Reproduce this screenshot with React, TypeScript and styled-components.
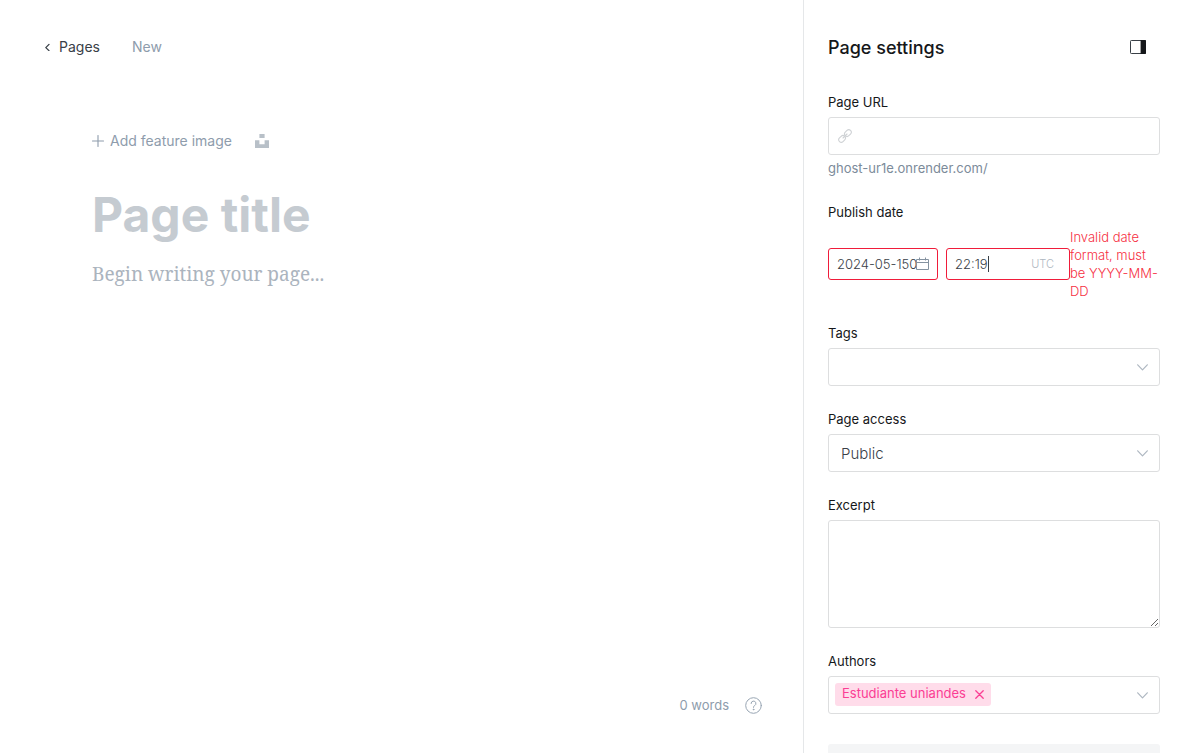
import React from "react";
import styled, { createGlobalStyle } from "styled-components";

const GlobalStyle = createGlobalStyle`
  *, *::before, *::after { box-sizing: border-box; }
  body {
    margin: 0;
    background: #fff;
    color: #15171a;
    font-family: Inter, "Liberation Sans", sans-serif;
    font-size: 13px;
    line-height: 20px;
  }
  button, input, select, textarea { font: inherit; color: inherit; }
`;

const Screen = styled.div`
  display: flex;
  height: 100vh;
  overflow: hidden;
`;

const Editor = styled.main`
  flex: 1;
  min-width: 0;
  display: flex;
  flex-direction: column;
`;

const TopBar = styled.header`
  display: flex;
  align-items: center;
  gap: 32px;
  padding: 37px 44px 0;
  font-size: 14px;
`;

const BackLink = styled.a`
  display: flex;
  align-items: center;
  gap: 8px;
  color: #394047;
  text-decoration: none;
`;

const Status = styled.span`
  color: #8e9cac;
`;

const Canvas = styled.section`
  flex: 1;
  display: flex;
  flex-direction: column;
  padding: 74px 92px 0;
`;

const ImageActions = styled.div`
  display: flex;
  align-items: center;
  gap: 23px;
`;

const PlainButton = styled.button`
  display: flex;
  align-items: center;
  gap: 6px;
  padding: 0;
  border: 0;
  background: none;
  color: #8e9cac;
  font-size: 14px;
  cursor: pointer;
`;

const TitleInput = styled.input`
  width: 100%;
  height: 60px;
  margin-top: 33px;
  padding: 0;
  border: 0;
  outline: 0;
  font-size: 48px;
  font-weight: 700;
  &::placeholder { color: #c5cbd1; opacity: 1; }
`;

const BodyInput = styled.textarea`
  flex: 1;
  width: 100%;
  margin-top: 14px;
  padding: 0;
  border: 0;
  outline: 0;
  resize: none;
  font-family: Georgia, "Noto Serif", "Liberation Serif", serif;
  font-size: 19px;
  line-height: 32px;
  &::placeholder { color: #abb4be; opacity: 1; }
`;

const Footer = styled.footer`
  display: flex;
  justify-content: flex-end;
  align-items: center;
  gap: 16px;
  padding: 0 41px 38px;
  color: #8e9cac;
`;

const Panel = styled.aside`
  flex: none;
  width: 381px;
  padding: 36px 24px 0;
  border-left: 1px solid #e5e7e9;
  overflow: hidden;
`;

const PanelHeader = styled.div`
  display: flex;
  justify-content: space-between;
  align-items: flex-start;
  height: 24px;
  padding-right: 14px;
  margin-bottom: 32px;
`;

const PanelTitle = styled.h2`
  margin: 0;
  font-size: 18px;
  line-height: 24px;
  font-weight: 500;
`;

const Form = styled.form`
  display: flex;
  flex-direction: column;
  gap: 23px;
`;

const Field = styled.div`
  display: flex;
  flex-direction: column;
`;

const Label = styled.label`
  margin-bottom: 5px;
`;

const Box = styled.div`
  display: flex;
  align-items: center;
  gap: 8px;
  height: 38px;
  padding: 0 11px 0 6px;
  border: 1px solid #dddedf;
  border-radius: 3px;
`;

const UrlBox = styled(Box)`
  padding-left: 9px;
`;

const BoxInput = styled.input`
  flex: 1;
  min-width: 0;
  padding: 0;
  border: 0;
  outline: 0;
  background: none;
`;

const Help = styled.p`
  margin: 3px 0 1px;
  color: #7c8b9a;
`;

const DateRow = styled.div`
  display: flex;
  align-items: center;
  padding-top: 1px;
`;

const InvalidBox = styled.div<{ $width: number; $end: number }>`
  position: relative;
  flex: none;
  display: flex;
  align-items: center;
  width: ${(p) => p.$width}px;
  height: 32px;
  padding: 0 ${(p) => p.$end}px 0 8px;
  border: 1px solid #f01c3a;
  border-radius: 3px;
  color: #394047;
  font-weight: 300;

  & + & { margin-left: 8px; }
`;

const Caret = styled.span`
  position: absolute;
  left: 41px;
  top: 7px;
  width: 1px;
  height: 16px;
  background: #394047;
`;

const Zone = styled.span`
  color: #aeb7c1;
  font-size: 11px;
`;

const ErrorText = styled.p`
  flex: 1;
  min-width: 0;
  margin: 0;
  color: #f62f42;
  font-weight: 300;
  line-height: 18px;
`;

const Select = styled.select`
  flex: 1;
  height: 36px;
  padding: 2px 0 0 6px;
  border: 0;
  outline: 0;
  appearance: none;
  background: none;
  color: #394047;
  font-size: 15px;
  font-weight: 300;
`;

const Excerpt = styled.textarea`
  display: block;
  width: 100%;
  height: 108px;
  border: 1px solid #dddedf;
  border-radius: 3px;
  outline: 0;
  resize: vertical;
`;

const Token = styled.span`
  display: flex;
  align-items: flex-start;
  align-self: flex-start;
  gap: 9px;
  height: 23px;
  margin-top: 6px;
  padding: 0 7px;
  border-radius: 3px;
  background: #ffdcea;
  color: #fb3e94;
`;

const TokenRemove = styled(PlainButton)`
  height: 23px;
  color: inherit;
`;

const ToggleButton = styled(PlainButton)`
  height: 22px;
`;

const DeleteButton = styled.button`
  height: 38px;
  margin-top: 7px;
  border: 0;
  border-radius: 3px;
  background: #f4f5f6;
`;

const Chevron = () => (
  <svg width="11" height="7" viewBox="0 0 11 7" fill="none" stroke="#aeb7c1" strokeWidth="1.2" strokeLinecap="round" strokeLinejoin="round" aria-hidden="true">
    <path d="M.7.8l4.8 5 4.8-5" />
  </svg>
);

const BackIcon = () => (
  <svg width="7" height="8" viewBox="0 0 7 8" fill="none" stroke="#394047" strokeWidth="1.3" strokeLinecap="round" strokeLinejoin="round" aria-hidden="true">
    <path d="M5 1.4L1.8 4.6 5 7.6" />
  </svg>
);

const PlusIcon = () => (
  <svg width="12" height="12" viewBox="0 0 12 12" stroke="#8e9cac" strokeWidth="1.1" strokeLinecap="round" aria-hidden="true">
    <path d="M6 .5v11M.5 6h11" />
  </svg>
);

const UnsplashIcon = () => (
  <svg width="14" height="14" viewBox="0 0 14 14" fill="#b8c0c8" aria-hidden="true">
    <path d="M4.4 0h5.2v4H4.4zM9.6 6.2H14V14H0V6.2h4.4v4h5.2z" />
  </svg>
);

const SidebarIcon = () => (
  <svg width="16" height="14" viewBox="0 0 16 14" aria-hidden="true">
    <rect x=".5" y=".5" width="15" height="13" rx=".8" fill="none" stroke="#394047" />
    <path d="M10.6 0h4.6q.8 0 .8.8v12.4q0 .8-.8.8h-4.6z" fill="#15171a" />
  </svg>
);

const LinkIcon = () => (
  <svg width="14" height="14" viewBox="0 0 14 14" fill="none" stroke="#cfd2d5" strokeWidth="1.1" strokeLinecap="round" aria-hidden="true">
    <rect x="-3.7" y="-2.5" width="7.4" height="5" rx="2.5" transform="translate(4.1 9.9) rotate(-45)" />
    <rect x="-3.7" y="-2.5" width="7.4" height="5" rx="2.5" transform="translate(9.9 4.1) rotate(-45)" />
    <path d="M5 9l4-4" />
  </svg>
);

const CalendarGlyph = styled.svg`
  position: absolute;
  right: 8px;
  top: 8px;
`;

const CalendarIcon = () => (
  <CalendarGlyph width="13" height="13" viewBox="0 0 13 13" fill="none" stroke="#8492a0" aria-hidden="true">
    <path d="M.5 2.5h12v10H.5zM.5 5.5h12M3.5.5v3M9.5.5v3" />
  </CalendarGlyph>
);

const CloseIcon = () => (
  <svg width="9" height="9" viewBox="0 0 9 9" stroke="#fb3e94" strokeWidth="1.3" strokeLinecap="round" aria-hidden="true">
    <path d="M.8.8l7.4 7.4M8.2.8L.8 8.2" />
  </svg>
);

const HelpIcon = () => (
  <svg width="17" height="17" viewBox="0 0 17 17" fill="none" stroke="#98a5b3" strokeLinecap="round" strokeLinejoin="round" aria-hidden="true">
    <circle cx="8.5" cy="8.5" r="7.8" />
    <path d="M6.1 6.5a2.4 2.4 0 1 1 3.5 2.1c-.8.4-1.1.9-1.1 1.8" />
    <circle cx="8.5" cy="12.5" r=".4" fill="#98a5b3" />
  </svg>
);

export default function App() {
  return (
    <>
      <GlobalStyle />
      <Screen>
        <Editor>
          <TopBar>
            <BackLink href="#pages"><BackIcon />Pages</BackLink>
            <Status>New</Status>
          </TopBar>
          <Canvas>
            <ImageActions>
              <PlainButton type="button"><PlusIcon />Add feature image</PlainButton>
              <PlainButton type="button" aria-label="Unsplash"><UnsplashIcon /></PlainButton>
            </ImageActions>
            <TitleInput aria-label="Page title" placeholder="Page title" />
            <BodyInput aria-label="Page content" placeholder="Begin writing your page..." />
          </Canvas>
          <Footer>
            <span>0 words</span>
            <PlainButton type="button" aria-label="Help"><HelpIcon /></PlainButton>
          </Footer>
        </Editor>
        <Panel>
          <PanelHeader>
            <PanelTitle>Page settings</PanelTitle>
            <ToggleButton type="button" aria-label="Toggle settings"><SidebarIcon /></ToggleButton>
          </PanelHeader>
          <Form>
            <Field>
              <Label htmlFor="url">Page URL</Label>
              <UrlBox><LinkIcon /><BoxInput id="url" /></UrlBox>
              <Help>ghost-ur1e.onrender.com/</Help>
            </Field>
            <Field>
              <Label htmlFor="date">Publish date</Label>
              <DateRow>
                <InvalidBox $width={110} $end={19}>
                  <BoxInput id="date" defaultValue="2024-05-150" />
                  <CalendarIcon />
                </InvalidBox>
                <InvalidBox $width={124} $end={15}>
                  <BoxInput aria-label="Publish time" defaultValue="22:19" />
                  <Caret />
                  <Zone>UTC</Zone>
                </InvalidBox>
                <ErrorText>Invalid date format, must be YYYY-MM-DD</ErrorText>
              </DateRow>
            </Field>
            <Field>
              <Label htmlFor="tags">Tags</Label>
              <Box><BoxInput id="tags" /><Chevron /></Box>
            </Field>
            <Field>
              <Label htmlFor="access">Page access</Label>
              <Box>
                <Select id="access" defaultValue="Public"><option>Public</option></Select>
                <Chevron />
              </Box>
            </Field>
            <Field>
              <Label htmlFor="excerpt">Excerpt</Label>
              <Excerpt id="excerpt" />
            </Field>
            <Field>
              <Label htmlFor="authors">Authors</Label>
              <Box>
                <Token>
                  Estudiante uniandes
                  <TokenRemove type="button" aria-label="Remove author"><CloseIcon /></TokenRemove>
                </Token>
                <BoxInput id="authors" />
                <Chevron />
              </Box>
            </Field>
            <DeleteButton type="button" aria-label="Delete page" />
          </Form>
        </Panel>
      </Screen>
    </>
  );
}
